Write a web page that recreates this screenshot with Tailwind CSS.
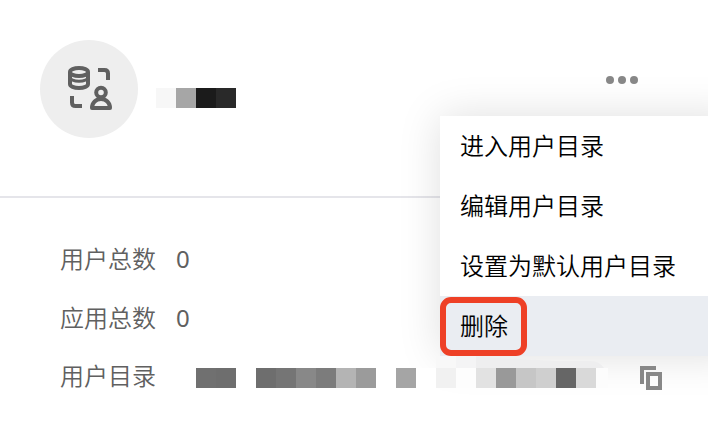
<!DOCTYPE html>
<html lang="zh-CN">
  <head>
    <meta charset="UTF-8" />
    <meta name="viewport" content="width=device-width, initial-scale=1.0" />
    <title>用户目录</title>
    <script src="https://cdn.jsdelivr.net/npm/@tailwindcss/browser@4"></script>
  </head>
  <body class="bg-white overflow-hidden font-['Noto_Sans_CJK_SC_DemiLight','Noto_Sans_CJK_SC',sans-serif] font-[350] text-2xl">
    <div class="relative w-[708px] h-[436px] overflow-hidden">
      <!-- card header -->
      <div class="flex h-[198px] border-b-2 border-[#e5e5ea] pl-10 pt-10">
        <div class="flex items-center justify-center size-[98px] rounded-full bg-[#eeeeee]">
          <svg class="size-12" viewBox="0 0 48 48" fill="none" stroke="#606060" stroke-width="4">
            <ellipse cx="14" cy="7" rx="9" ry="4" />
            <path d="M5 7v12c0 2.200 4 4 9 4s9-1.800 9-4V7" />
            <path d="M5 12.500c0 2 4 3.800 9 3.800s9-1.800 9-3.800" stroke-width="3" />
            <path d="M33 5h6.500q3.500 0 3.500 3.500V15M7 31v6.500q0 3.500 3.500 3.500H17" />
            <circle cx="36" cy="27.500" r="4.800" />
            <path d="M27 43c0-5.500 4-9 9-9s9 3.500 9 9z" stroke-linejoin="round" />
          </svg>
        </div>
        <div class="flex ml-[18px] mt-12 h-5">
          <span class="w-5 bg-[#f7f7f7]"></span>
          <span class="w-5 bg-[#a6a6a6]"></span>
          <span class="w-5 bg-[#1b1b1b]"></span>
          <span class="w-5 bg-[#292929]"></span>
        </div>
        <div class="flex gap-1 ml-auto mr-[70px] mt-9">
          <span class="size-2 rounded-full bg-[#888888]"></span>
          <span class="size-2 rounded-full bg-[#888888]"></span>
          <span class="size-2 rounded-full bg-[#888888]"></span>
        </div>
      </div>

      <!-- details -->
      <div class="flex flex-col pl-[60px] pt-[30px] text-[#606060]">
        <div class="flex items-center h-[59px]">
          <span>用户总数</span>
          <span class="ml-5 pt-0.5 font-['Noto_Sans'] font-normal">0</span>
        </div>
        <div class="flex items-center h-[59px]">
          <span>应用总数</span>
          <span class="ml-5 pt-0.5 font-['Noto_Sans'] font-normal">0</span>
        </div>
        <div class="flex items-center h-[58px]">
          <span>用户目录</span>
          <div class="flex ml-10 mt-[6px] h-5">
            <span class="w-5 bg-[#707070]"></span>
            <span class="w-5 bg-[#6e6e6e]"></span>
            <span class="w-5"></span>
            <span class="w-5 bg-[#6e6e6e]"></span>
            <span class="w-5 bg-[#757575]"></span>
            <span class="w-5 bg-[#888888]"></span>
            <span class="w-5 bg-[#7c7c7c]"></span>
            <span class="w-5 bg-[#b4b4b4]"></span>
            <span class="w-5 bg-[#9b9b9b]"></span>
            <span class="w-5"></span>
            <span class="w-5 bg-[#a5a5a5]"></span>
          </div>
        </div>
      </div>

      <!-- dropdown menu -->
      <ul class="absolute left-[440px] top-[116px] w-[300px] bg-white text-black shadow-[0_0_40px_rgba(0,0,0,0.13)]">
        <li class="flex items-center h-[60px] pl-5 pb-0.5">进入用户目录</li>
        <li class="flex items-center h-[60px] pl-5 pb-0.5">编辑用户目录</li>
        <li class="flex items-center h-[60px] pl-5 pb-0.5">设置为默认用户目录</li>
        <li class="relative flex items-center h-[60px] pl-5 pb-0.5 bg-[#eaedf2]">
          删除
          <span class="absolute left-0 top-px w-[87px] h-[59px] rounded-[11px] border-6 border-[#ee4026]"></span>
        </li>
      </ul>

      <!-- masked value that continues over the menu shadow -->
      <svg class="absolute left-[436px] top-[356px] w-[172px] h-3" viewBox="0 0 172 12">
        <path d="M0 0h20v12H0z" fill="#f8f8f8" />
        <path d="M20 0h20v12H20z" fill="#f4f4f5" />
        <path d="M40 1l80 4h35q8 0 13 7H40z" fill="#eeeeef" />
      </svg>
      <div class="absolute left-[416px] top-[368px] flex h-5">
        <span class="w-5 bg-white"></span>
        <span class="w-5 bg-[#f1f1f1]"></span>
        <span class="w-5 bg-[#fdfdfd]"></span>
        <span class="w-5 bg-[#e2e2e2]"></span>
        <span class="w-5 bg-[#999999]"></span>
        <span class="w-5 bg-[#c6c6c6]"></span>
        <span class="w-5 bg-[#cfcfcf]"></span>
        <span class="w-5 bg-[#666666]"></span>
        <span class="w-5 bg-[#d9d9d9]"></span>
        <span class="w-3 bg-[#fcfcfc]"></span>
      </div>
      <svg class="absolute left-[640px] top-[366px] w-[22px] h-6" viewBox="0 0 22 24" fill="none" stroke="#888888" stroke-width="4">
        <path d="M16 2H2v16M8 8h12v14H8z" />
      </svg>
    </div>
  </body>
</html>
